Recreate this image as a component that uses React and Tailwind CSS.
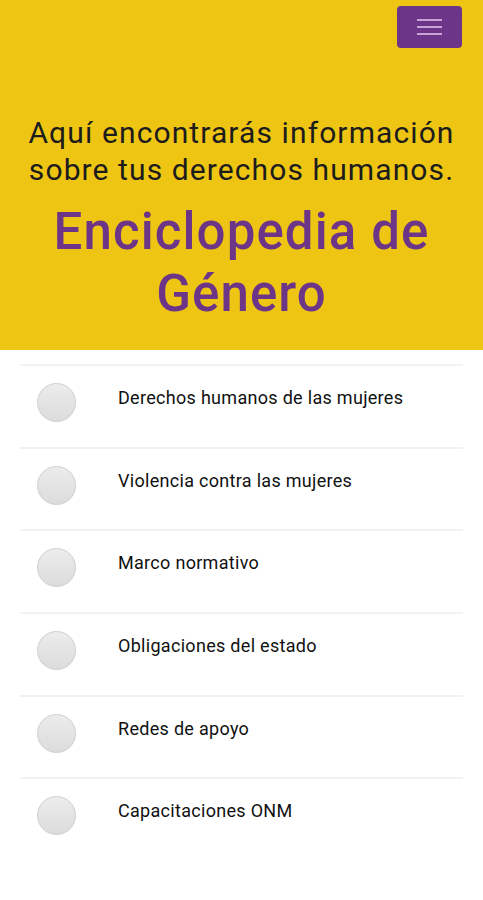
import React from 'react';

const topics = [
  'Derechos humanos de las mujeres',
  'Violencia contra las mujeres',
  'Marco normativo',
  'Obligaciones del estado',
  'Redes de apoyo',
  'Capacitaciones ONM',
];

const App = () => {
  return (
    <div className="min-h-[900px] bg-white" style={{ fontFamily: 'Roboto, "Liberation Sans", sans-serif' }}>
      {/* Header */}
      <header className="bg-[#efc514] h-[350px] flex flex-col">
        <div className="flex justify-end pt-[6px] pr-[21px]">
          <button className="w-[65px] h-[42px] bg-[#6d3587] rounded-[4px] flex flex-col items-center justify-center gap-[5px]">
            <span className="block w-[25px] h-[2px] bg-[#c8a3d8]"></span>
            <span className="block w-[25px] h-[2px] bg-[#c8a3d8]"></span>
            <span className="block w-[25px] h-[2px] bg-[#c8a3d8]"></span>
          </button>
        </div>
        <p className="mt-[66px] text-center text-[30px] tracking-[1.1px] leading-[37px] text-[#1c1c1c]">
          Aquí encontrarás información<br />sobre tus derechos humanos.
        </p>
        <h1 className="mt-[13px] text-center text-[51px] tracking-[1.1px] leading-[62px] font-medium text-[#6d3587]">
          Enciclopedia de<br />Género
        </h1>
      </header>

      {/* Topics */}
      <ul className="mx-[20px] mt-[14px]">
        {topics.map((topic) => (
          <li key={topic} className="h-[82.7px] border-t-2 border-[#f2f2f2] flex items-start pt-[17px]">
            <span className="ml-[17px] w-[39px] h-[39px] rounded-full border border-[#cfcfcf] bg-gradient-to-b from-[#ececec] to-[#dcdcdc] shrink-0"></span>
            <span className="ml-[42px] mt-[3px] text-[18px] tracking-[0.3px] leading-[24px] text-[#111]">{topic}</span>
          </li>
        ))}
      </ul>
    </div>
  );
};

export default App;
